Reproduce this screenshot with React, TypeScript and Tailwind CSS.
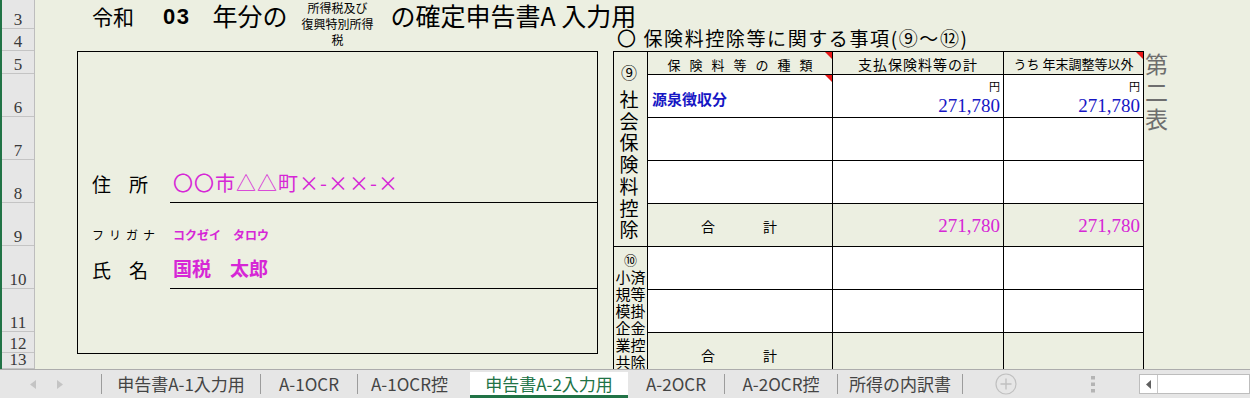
import React from "react";

const MAG = "text-[#d626d6]";
const BLUE = "text-[#1616c4]";

function Tri() {
  return (
    <div className="absolute top-0 right-0 w-0 h-0 border-t-[7px] border-l-[7px] border-t-[#e81818] border-l-transparent" />
  );
}

function RowHeader() {
  const rows: [string, string][] = [
    ["3", "h-[29px]"],
    ["4", "h-[22px]"],
    ["5", "h-[23px]"],
    ["6", "h-[43px]"],
    ["7", "h-[43px]"],
    ["8", "h-[43px]"],
    ["9", "h-[43px]"],
    ["10", "h-[43px]"],
    ["11", "h-[43px]"],
    ["12", "h-[21px]"],
    ["13", "h-[16px]"],
  ];
  return (
    <div className="w-[35px] shrink-0 border-l-2 border-l-[#217346] border-r border-r-[#bdbdbd] bg-[#e6e6e6] flex flex-col">
      {rows.map(([n, h]) => (
        <div
          key={n}
          className={`${h} shrink-0 overflow-hidden flex items-end justify-center border-b border-b-[#c4c4c4] font-['Liberation_Serif',serif] text-[17px] leading-[17px] text-[#3a3a3a]`}
        >
          {n}
        </div>
      ))}
    </div>
  );
}

function Header() {
  return (
    <div className="h-[51px] shrink-0 grid">
      <div className="col-start-1 row-start-1 flex items-start pl-[57px] text-black">
        <span className="mt-[4px] text-[21px] leading-[24px]">令和</span>
        <span className="ml-[29px] mt-[4px] font-['Liberation_Sans',sans-serif] font-bold text-[22px] leading-[26px] tracking-[1.5px]">
          03
        </span>
        <span className="ml-[22px] mt-[1px] text-[25px] leading-[28px]">年分の</span>
        <div className="ml-[9px] w-[82px] text-center text-[12px] leading-[16px]">
          所得税及び
          <br />
          復興特別所得
          <br />
          税
        </div>
        <span className="ml-[12px] mt-[1px] text-[25px] leading-[28px]">の確定申告書A 入力用</span>
      </div>
      <div className="col-start-1 row-start-1 pl-[582px] pt-[27px] text-[19px] leading-[22px] tracking-[1.6px] text-black">
        〇 保険料控除等に関する事項(⑨～⑫)
      </div>
    </div>
  );
}

function AddressBox() {
  return (
    <div className="w-[521px] h-[303px] shrink-0 border border-black flex flex-col text-black">
      <div className="h-[108px] shrink-0" />
      <div className="h-[43px] shrink-0 flex">
        <div className="w-[92px] pl-[14px] pt-[4px] flex items-center">
          <div className="w-[56px] flex justify-between text-[19px] leading-[22px]">
            <span>住</span>
            <span>所</span>
          </div>
        </div>
        <div className={`flex-1 border-b border-black flex items-center pl-[3px] pt-[4px] text-[20px] leading-[24px] tracking-[1px] ${MAG}`}>
          〇〇市△△町×-××-×
        </div>
      </div>
      <div className="h-[43px] shrink-0 flex items-end pb-[4px]">
        <div className="w-[92px] pl-[14px] text-[12px] leading-[14px] tracking-[5px]">フリガナ</div>
        <div className={`pl-[3px] text-[12px] leading-[14px] font-bold ${MAG}`}>コクゼイ　タロウ</div>
      </div>
      <div className="h-[43px] shrink-0 flex">
        <div className="w-[92px] pl-[14px] pt-[4px] flex items-center">
          <div className="w-[56px] flex justify-between text-[19px] leading-[22px]">
            <span>氏</span>
            <span>名</span>
          </div>
        </div>
        <div className={`flex-1 border-b border-black flex items-center pl-[3px] pt-[2px] text-[19px] leading-[24px] font-bold ${MAG}`}>
          国税　太郎
        </div>
      </div>
    </div>
  );
}

function Cell({
  className = "",
  children,
}: {
  className?: string;
  children?: React.ReactNode;
}) {
  return <div className={`relative border-r border-b border-black ${className}`}>{children}</div>;
}

function Amount({ color }: { color: string }) {
  return (
    <Cell className="bg-white flex flex-col items-end pr-[3px]">
      <span className="mt-[5px] text-[11px] leading-[12px]">円</span>
      <span className={`mt-[3px] font-['Liberation_Serif',serif] text-[19px] leading-[22px] ${color}`}>271,780</span>
    </Cell>
  );
}

function Total({ value }: { value?: boolean }) {
  return (
    <Cell className="flex items-center justify-end pr-[3px] pt-[2px]">
      {value && (
        <span className={`font-['Liberation_Serif',serif] text-[19px] leading-[22px] ${MAG}`}>271,780</span>
      )}
    </Cell>
  );
}

function GokeiLabel() {
  return (
    <Cell className="flex items-center pl-[53px] pt-[2px] text-[14px] leading-[18px]">
      <span>合</span>
      <span className="ml-[48px]">計</span>
    </Cell>
  );
}

function Table() {
  const shakai = ["社", "会", "保", "険", "料", "控", "除"];
  const shokibo = ["小", "済", "規", "等", "模", "掛", "企", "金", "業", "控", "共", "除"];
  return (
    <div className="ml-[15px] shrink-0 grid grid-cols-[34px_185px_171px_140px] grid-rows-[23px_repeat(7,43px)] border-l border-t border-black text-black">
      <Cell className="row-span-5 flex flex-col items-center pt-[8px] pr-[3px]">
        <span className="text-[16px] leading-[24px] mb-[4px]">⑨</span>
        {shakai.map((c) => (
          <span key={c} className="text-[19px] leading-[21.7px]">
            {c}
          </span>
        ))}
      </Cell>
      <Cell className="flex items-center justify-center pt-[3px] text-[13px] leading-[16px] tracking-[9px] pl-[9px]">
        保険料等の種類
        <Tri />
      </Cell>
      <Cell className="flex items-center justify-center pt-[1px] text-[14px] leading-[16px] tracking-[1px]">
        支払保険料等の計
      </Cell>
      <Cell className="flex items-center justify-center pt-[1px] text-[13px] leading-[16px]">
        うち 年末調整等以外
        <Tri />
      </Cell>

      <Cell className={`bg-white flex items-center pl-[4px] pt-[6px] text-[15px] leading-[18px] font-bold ${BLUE}`}>
        源泉徴収分
        <Tri />
      </Cell>
      <Amount color={BLUE} />
      <Amount color={BLUE} />

      <Cell className="bg-white" />
      <Cell className="bg-white" />
      <Cell className="bg-white" />
      <Cell className="bg-white" />
      <Cell className="bg-white" />
      <Cell className="bg-white" />

      <GokeiLabel />
      <Total value />
      <Total value />

      <Cell className="row-span-3 flex flex-col items-center pt-[4px]">
        <span className="text-[13px] leading-[17px]">⑩</span>
        <div className="grid grid-cols-[15px_15px]">
          {shokibo.map((c, i) => (
            <span key={i} className="text-[15px] leading-[17px] text-center">
              {c}
            </span>
          ))}
        </div>
      </Cell>
      <Cell className="bg-white" />
      <Cell className="bg-white" />
      <Cell className="bg-white" />
      <Cell className="bg-white" />
      <Cell className="bg-white" />
      <Cell className="bg-white" />
      <GokeiLabel />
      <Total />
      <Total />
    </div>
  );
}

function Sep() {
  return <div className="w-px h-[20px] self-center bg-[#9c9c9c] shrink-0" />;
}

function TabBar() {
  return (
    <div className="h-[29px] shrink-0 bg-[#e6e6e6] border-t border-t-[#acacac] flex items-stretch text-[17px] leading-[20px] text-[#444]">
      <div className="w-[101px] shrink-0 flex items-center">
        <svg width="6" height="9" viewBox="0 0 6 9" className="ml-[30px]">
          <path d="M6 0 L0 4.5 L6 9 Z" fill="#c4c4c4" />
        </svg>
        <svg width="6" height="9" viewBox="0 0 6 9" className="ml-[21px]">
          <path d="M0 0 L6 4.5 L0 9 Z" fill="#c4c4c4" />
        </svg>
      </div>
      <Sep />
      <div className="w-[158px] shrink-0 flex items-center justify-center">申告書A-1入力用</div>
      <Sep />
      <div className="w-[96px] shrink-0 flex items-center justify-center">A-1OCR</div>
      <Sep />
      <div className="w-[112px] shrink-0 flex items-center pl-[13px]">A-1OCR控</div>
      <div className="w-[158px] shrink-0 mt-[2px] bg-white border-b-[3px] border-b-[#217346] flex items-center justify-center pt-[1px] text-[#217346]">
        申告書A-2入力用
      </div>
      <div className="w-[96px] shrink-0 flex items-center justify-center">A-2OCR</div>
      <Sep />
      <div className="w-[112px] shrink-0 flex items-center justify-center">A-2OCR控</div>
      <Sep />
      <div className="w-[124px] shrink-0 flex items-center justify-center">所得の内訳書</div>
      <Sep />
      <div className="w-[83px] shrink-0 flex items-center justify-center pl-[2px]">
        <svg width="22" height="22" viewBox="0 0 22 22">
          <circle cx="11" cy="11" r="10" fill="none" stroke="#c0c0c0" strokeWidth="1.2" />
          <path d="M11 5.5 V16.5 M5.5 11 H16.5" stroke="#c0c0c0" strokeWidth="1.4" />
        </svg>
      </div>
      <div className="w-[93px] shrink-0 flex items-center justify-center">
        <svg width="4" height="17" viewBox="0 0 4 17">
          <rect x="0" y="0" width="4" height="3.5" fill="#b4b4b4" />
          <rect x="0" y="6.5" width="4" height="3.5" fill="#b4b4b4" />
          <rect x="0" y="13" width="4" height="3.5" fill="#b4b4b4" />
        </svg>
      </div>
      <div className="flex-1 my-[4px] bg-white border border-[#bdbdbd] flex">
        <div className="w-[18px] border-r border-r-[#c8c8c8] flex items-center justify-center">
          <svg width="5" height="9" viewBox="0 0 5 9">
            <path d="M5 0 L0 4.5 L5 9 Z" fill="#606060" />
          </svg>
        </div>
      </div>
    </div>
  );
}

export default function App() {
  return (
    <div className="w-[1250px] h-[398px] overflow-hidden flex flex-col bg-[#ecefe1] font-['Noto_Sans_CJK_JP',sans-serif]">
      <div className="h-[369px] shrink-0 flex overflow-hidden">
        <RowHeader />
        <div className="flex-1 flex flex-col min-w-0">
          <Header />
          <div className="flex items-start pl-[42px]">
            <AddressBox />
            <Table />
            <div className="ml-[1px] -mt-[1px] flex flex-col items-center text-[23px] leading-[27.5px] text-[#6e6e6e]">
              <span>第</span>
              <span>二</span>
              <span>表</span>
            </div>
          </div>
        </div>
      </div>
      <TabBar />
    </div>
  );
}
